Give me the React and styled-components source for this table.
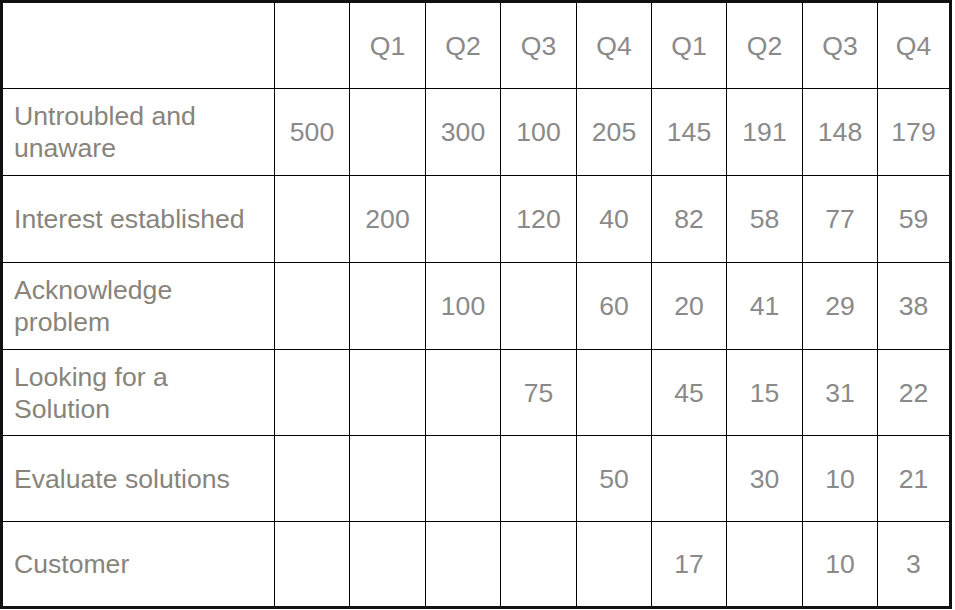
import React from "react";
import styled, { createGlobalStyle } from "styled-components";

const GlobalStyle = createGlobalStyle`
  html, body {
    margin: 0;
    padding: 0;
    background: #ffffff;
  }
`;

const Table = styled.table`
  border-collapse: collapse;
  table-layout: fixed;
  width: 952px;
  border: 3px solid #111;
  font-family: "Liberation Sans", Arial, Helvetica, sans-serif;
  font-size: 26.6px;
`;

const Row = styled.tr`
  height: ${(p) => p.$h}px;
`;

const Cell = styled.td`
  border: 1px solid #000;
  padding: 0;
  text-align: center;
  vertical-align: middle;
  color: #8a8a8a;
  line-height: 32px;
`;

const LabelCell = styled(Cell)`
  text-align: left;
  padding-left: 11px;
  color: #88847b;
`;

const quarters = ["Q1", "Q2", "Q3", "Q4", "Q1", "Q2", "Q3", "Q4"];

const rows = [
  { label: ["Untroubled and", "unaware"], values: ["500", "", "300", "100", "205", "145", "191", "148", "179"], h: 87 },
  { label: ["Interest established"], values: ["", "200", "", "120", "40", "82", "58", "77", "59"], h: 87 },
  { label: ["Acknowledge", "problem"], values: ["", "", "100", "", "60", "20", "41", "29", "38"], h: 87 },
  { label: ["Looking for a", "Solution"], values: ["", "", "", "75", "", "45", "15", "31", "22"], h: 86 },
  { label: ["Evaluate solutions"], values: ["", "", "", "", "50", "", "30", "10", "21"], h: 86 },
  { label: ["Customer"], values: ["", "", "", "", "", "17", "", "10", "3"], h: 86 },
];

const colWidths = [273, 75, 76, 75, 76, 75, 75, 76, 75, 73];

function App() {
  return (
    <>
      <GlobalStyle />
      <Table>
        <colgroup>
          {colWidths.map((w, i) => (
            <col key={i} style={{ width: w }} />
          ))}
        </colgroup>
        <tbody>
          <Row $h={87}>
            <LabelCell />
            <Cell />
            {quarters.map((q, i) => (
              <Cell key={i}>{q}</Cell>
            ))}
          </Row>
          {rows.map((r, i) => (
            <Row key={i} $h={r.h}>
              <LabelCell>
                {r.label.map((line, j) => (
                  <React.Fragment key={j}>
                    {j > 0 && <br />}
                    {line}
                  </React.Fragment>
                ))}
              </LabelCell>
              {r.values.map((v, j) => (
                <Cell key={j}>{v}</Cell>
              ))}
            </Row>
          ))}
        </tbody>
      </Table>
    </>
  );
}

export default App;
